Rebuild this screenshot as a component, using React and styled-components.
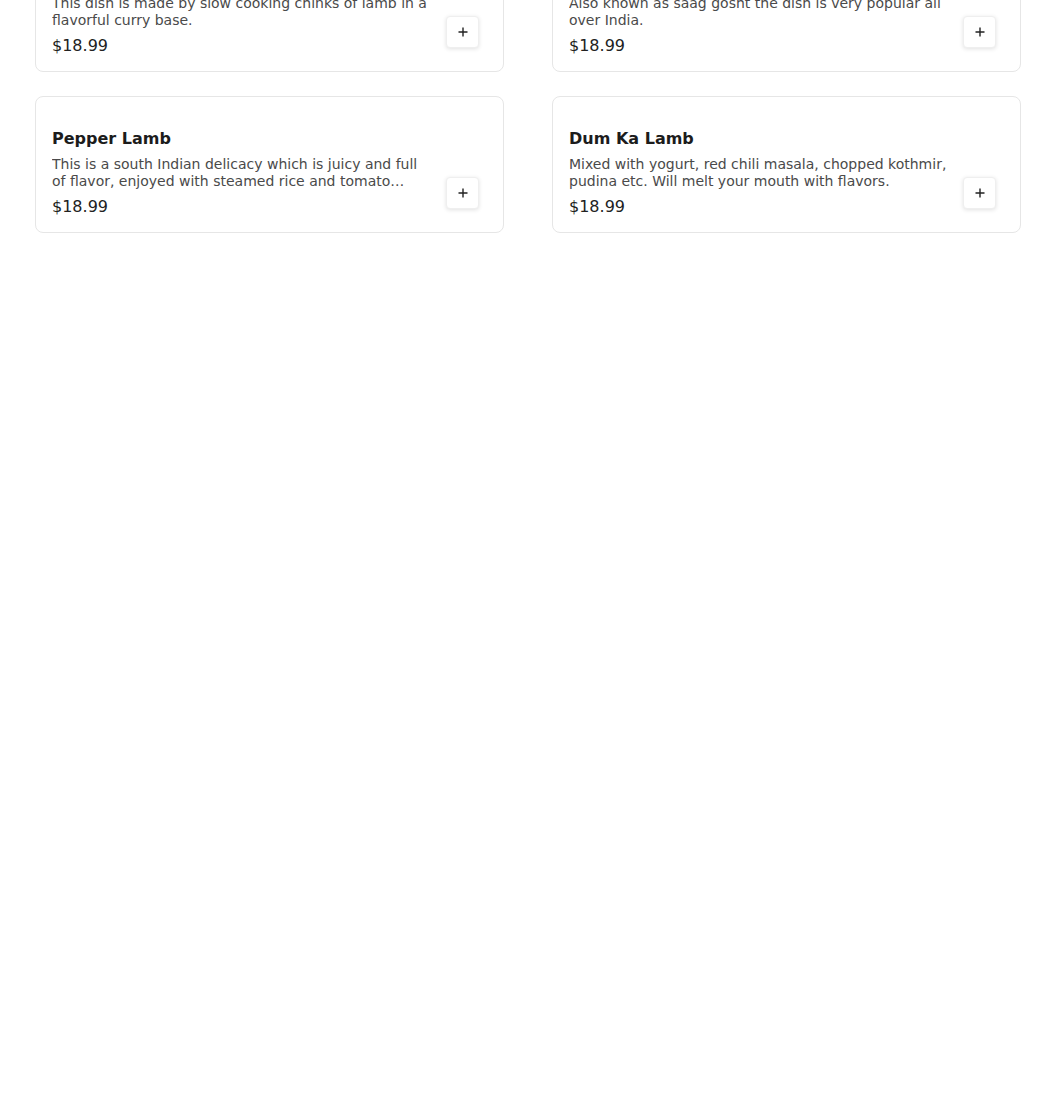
import React from "react";
import styled, { createGlobalStyle } from "styled-components";

const GlobalStyle = createGlobalStyle`
  body {
    margin: 0;
    background: #ffffff;
    font-family: "DejaVu Sans", "Liberation Sans", sans-serif;
  }
`;

const Page = styled.div`
  padding: 0 29px 0 35px;
  overflow: hidden;
  height: 1117px;
`;

const Grid = styled.div`
  display: grid;
  grid-template-columns: 1fr 1fr;
  column-gap: 48px;
  row-gap: 24px;
  margin-top: -65px;
`;

const Card = styled.div`
  display: flex;
  gap: 16px;
  padding: 30px 24px 13px 16px;
  border: 1px solid #e6e6e6;
  border-radius: 8px;
  background: #fff;
`;

const Info = styled.div`
  flex: 1;
  min-width: 0;
  display: flex;
  flex-direction: column;
`;

const Title = styled.h3`
  margin: 0;
  font-size: 16px;
  line-height: 24px;
  font-weight: 700;
  color: #1c1c1c;
`;

const Description = styled.p`
  margin: 5px 0 5px;
  font-size: 14px;
  line-height: 17px;
  color: #4a4a4a;
  display: -webkit-box;
  -webkit-line-clamp: 2;
  -webkit-box-orient: vertical;
  overflow: hidden;
`;

const Price = styled.span`
  font-size: 16px;
  line-height: 24px;
  color: #222;
`;

const AddButton = styled.button`
  align-self: flex-end;
  margin-bottom: 10px;
  width: 33px;
  height: 32px;
  flex: none;
  display: flex;
  align-items: center;
  justify-content: center;
  padding: 0;
  border: 1px solid #efefef;
  border-radius: 4px;
  background: #fff;
  box-shadow: 0 1px 4px rgba(0, 0, 0, 0.12);
  color: #222;
  cursor: pointer;
`;

const dishes = [
  {
    name: "Lamb Curry",
    description:
      "This dish is made by slow cooking chinks of lamb in a flavorful curry base.",
    price: "$18.99",
  },
  {
    name: "Lamb Saag",
    description:
      "Also known as saag gosht the dish is very popular all over India.",
    price: "$18.99",
  },
  {
    name: "Pepper Lamb",
    description:
      "This is a south Indian delicacy which is juicy and full of flavor, enjoyed with steamed rice and tomato rasam.",
    price: "$18.99",
  },
  {
    name: "Dum Ka Lamb",
    description:
      "Mixed with yogurt, red chili masala, chopped kothmir, pudina etc. Will melt your mouth with flavors.",
    price: "$18.99",
  },
];

const PlusIcon = () => (
  <svg width="12" height="12" viewBox="0 0 12 12">
    <path d="M6 1.5v9M1.5 6h9" stroke="#222" strokeWidth="1.4" />
  </svg>
);

const App = () => {
  return (
    <Page>
      <GlobalStyle />
      <Grid>
        {dishes.map((dish) => (
          <Card key={dish.name}>
            <Info>
              <Title>{dish.name}</Title>
              <Description>{dish.description}</Description>
              <Price>{dish.price}</Price>
            </Info>
            <AddButton aria-label={`Add ${dish.name}`}>
              <PlusIcon />
            </AddButton>
          </Card>
        ))}
      </Grid>
    </Page>
  );
};

export default App;
